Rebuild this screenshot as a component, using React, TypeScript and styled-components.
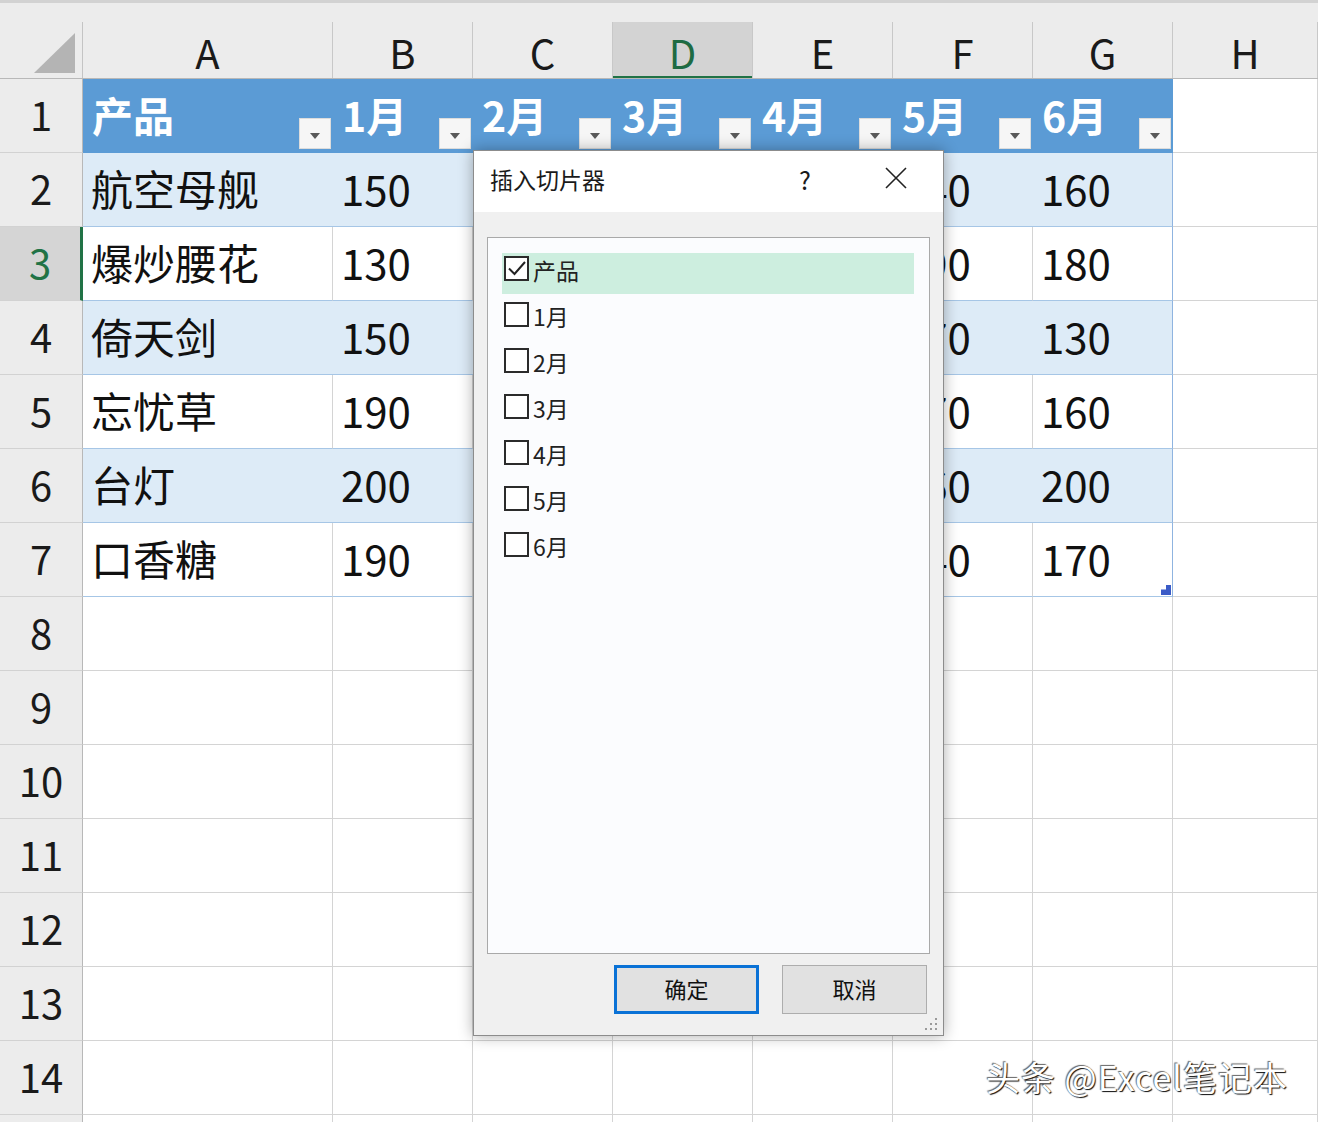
import React from 'react'
import styled, { createGlobalStyle, css } from 'styled-components'

const GlobalStyle = createGlobalStyle`
  html, body {
    margin: 0;
    padding: 0;
    background: #fff;
    overflow: hidden;
  }
  body {
    font-family: "Noto Sans CJK SC", "Noto Sans", sans-serif;
    color: #111;
  }
`

const COLS = '83px 250px 140px 140px 140px 140px 140px 140px 145px'
const LETTERS = ['A', 'B', 'C', 'D', 'E', 'F', 'G', 'H']
const HEADERS = ['产品', '1月', '2月', '3月', '4月', '5月', '6月']

const ROWS: string[][] = [
  ['航空母舰', '150', '120', '140', '130', '140', '160'],
  ['爆炒腰花', '130', '160', '150', '170', '190', '180'],
  ['倚天剑', '150', '140', '180', '120', '170', '130'],
  ['忘忧草', '190', '170', '130', '150', '170', '160'],
  ['台灯', '200', '180', '160', '190', '160', '200'],
  ['口香糖', '190', '150', '170', '140', '140', '170'],
]

const FIELDS = ['产品', '1月', '2月', '3月', '4月', '5月', '6月']

type Kind = 'head' | 'band' | 'plain' | 'blank'

const Sheet = styled.div`
  position: relative;
  width: 1318px;
  height: 1122px;
  overflow: hidden;
  background: #fff;
`

const HeaderRow = styled.div`
  display: grid;
  grid-template-columns: ${COLS};
  height: 79px;
  box-sizing: border-box;
  border-top: 3px solid #d2d2d2;
  border-bottom: 1px solid #b8b8b8;
  background: #ececec;
  align-items: end;
`

const Corner = styled.div`
  position: relative;
  height: 56px;
  box-sizing: border-box;
  border-right: 1px solid #c4c4c4;
  &::after {
    content: '';
    position: absolute;
    right: 7px;
    bottom: 5px;
    width: 41px;
    height: 40px;
    background: #b4b4b4;
    clip-path: polygon(100% 0, 100% 100%, 0 100%);
  }
`

const ColHead = styled.div<{ $active?: boolean }>`
  height: 56px;
  box-sizing: border-box;
  border-right: 1px solid #c8c8c8;
  display: flex;
  align-items: center;
  justify-content: center;
  padding-top: 3px;
  font-size: 40px;
  color: #1a1a1a;
  ${(p) =>
    p.$active &&
    css`
      background: #d3d3d3;
      color: #1e6b43;
      box-shadow: inset 0 -2px 0 #217346;
    `}
`

const Row = styled.div`
  display: grid;
  grid-template-columns: ${COLS};
  height: 74px;
`

const RowHead = styled.div<{ $active?: boolean }>`
  box-sizing: border-box;
  background: #ececec;
  border-right: 1px solid #b8b8b8;
  border-bottom: 1px solid #d2d2d2;
  display: flex;
  align-items: center;
  justify-content: center;
  padding-bottom: 4px;
  font-size: 40px;
  color: #1a1a1a;
  ${(p) =>
    p.$active &&
    css`
      background: #d5d5d5;
      color: #217346;
      border-right: 3px solid #217346;
    `}
`

const Cell = styled.div<{ $kind: Kind; $edge?: boolean }>`
  position: relative;
  box-sizing: border-box;
  display: flex;
  align-items: center;
  padding-left: 8px;
  padding-right: 2px;
  padding-bottom: 4px;
  font-size: 42px;
  line-height: 1;
  white-space: nowrap;
  ${(p) =>
    p.$kind === 'head' &&
    css`
      background: #5b9bd5;
      color: #fff;
      font-weight: 700;
      font-size: 41px;
      padding-left: 9px;
      padding-bottom: 0;
    `}
  ${(p) =>
    p.$kind === 'band' &&
    css`
      background: #ddebf7;
      border-bottom: 1px solid #a6c6e6;
    `}
  ${(p) =>
    p.$kind === 'plain' &&
    css`
      background: #fff;
      border-right: 1px solid #d4d4d4;
      border-bottom: 1px solid #a6c6e6;
    `}
  ${(p) =>
    p.$kind === 'blank' &&
    css`
      background: #fff;
      border-right: 1px solid #d4d4d4;
      border-bottom: 1px solid #d4d4d4;
    `}
  ${(p) =>
    p.$edge &&
    css`
      border-right: 1px solid #8fb4e0;
    `}
`

const HeadLabel = styled.span`
  margin-top: -4px;
`

const FilterButton = styled.div`
  margin-left: auto;
  align-self: flex-end;
  margin-bottom: 4px;
  width: 32px;
  height: 31px;
  box-sizing: border-box;
  background: #f6f6f6;
  border: 1px solid #dcdcdc;
  display: flex;
  align-items: center;
  justify-content: center;
  padding-top: 5px;
`

const ResizeHandle = styled.div`
  position: absolute;
  right: 1px;
  bottom: 1px;
  width: 10px;
  height: 10px;
  background: #3a5bc7;
  clip-path: polygon(100% 0, 100% 100%, 0 100%, 0 45%, 50% 45%, 50% 0);
`

const Dialog = styled.div`
  position: absolute;
  left: 473px;
  top: 150px;
  width: 471px;
  height: 886px;
  box-sizing: border-box;
  border: 1px solid #8c8c8c;
  background: #f0f0f0;
  box-shadow: 0 0 14px rgba(0, 0, 0, 0.32);
  display: flex;
  flex-direction: column;
`

const TitleBar = styled.div`
  height: 61px;
  flex: none;
  background: #fff;
  display: flex;
  align-items: center;
  padding-left: 16px;
  padding-bottom: 5px;
  box-sizing: border-box;
`

const Title = styled.span`
  font-size: 23px;
  color: #1a1a1a;
`

const HelpButton = styled.span`
  margin-left: auto;
  width: 44px;
  text-align: center;
  font-size: 25px;
  color: #1a1a1a;
  margin-right: 22px;
`

const CloseButton = styled.span`
  width: 94px;
  display: flex;
  align-items: center;
  justify-content: center;
  padding-bottom: 2px;
`

const Body = styled.div`
  flex: 1;
  display: flex;
  flex-direction: column;
  padding: 25px 13px 21px 13px;
`

const ListBox = styled.div`
  flex: 1;
  background: #fbfcfe;
  border: 1px solid #a9a9a9;
  padding: 15px 15px 0 14px;
  display: flex;
  flex-direction: column;
  gap: 5px;
`

const Item = styled.div<{ $selected?: boolean }>`
  height: 41px;
  display: flex;
  align-items: center;
  padding-left: 2px;
  background: ${(p) => (p.$selected ? '#cdeedf' : 'transparent')};
`

const Box = styled.span`
  width: 25px;
  height: 25px;
  box-sizing: border-box;
  border: 2px solid #2b2b2b;
  background: #fff;
  display: flex;
  align-items: center;
  justify-content: center;
  margin-top: -10px;
`

const ItemLabel = styled.span`
  margin-left: 4px;
  font-size: 23px;
  color: #222;
  margin-top: -8px;
`

const Buttons = styled.div`
  display: flex;
  justify-content: flex-end;
  gap: 23px;
  margin-top: 11px;
  padding-right: 3px;
`

const DialogButton = styled.div<{ $primary?: boolean }>`
  width: 145px;
  height: 49px;
  box-sizing: border-box;
  background: #e1e1e1;
  border: ${(p) => (p.$primary ? '3px solid #0a72d6' : '1px solid #adadad')};
  display: flex;
  align-items: center;
  justify-content: center;
  padding-bottom: 3px;
  font-size: 22px;
  color: #111;
`

const Grip = styled.div`
  position: absolute;
  right: 6px;
  bottom: 5px;
  width: 12px;
  height: 12px;
  display: grid;
  grid-template-columns: repeat(3, 2px);
  grid-template-rows: repeat(3, 2px);
  gap: 3px;
  span {
    background: #9a9a9a;
  }
`

const Watermark = styled.div`
  position: absolute;
  left: 986px;
  top: 1052px;
  font-size: 34px;
  letter-spacing: 1px;
  color: #fff;
  white-space: nowrap;
  text-shadow: 1px 1px 1px rgba(0, 0, 0, 0.95), -1px -1px 1px rgba(0, 0, 0, 0.6);
`

function Triangle() {
  return (
    <svg width="12" height="8" viewBox="0 0 12 8">
      <path d="M1 1 L11 1 L6 7 Z" fill="#595959" />
    </svg>
  )
}

function CloseIcon() {
  return (
    <svg width="22" height="22" viewBox="0 0 22 22">
      <path d="M1 1 L21 21 M21 1 L1 21" stroke="#222" strokeWidth="1.6" />
    </svg>
  )
}

function Check() {
  return (
    <svg width="21" height="21" viewBox="0 0 21 21">
      <path d="M3 10.5 L8.5 16 L19 4" stroke="#222" strokeWidth="2" fill="none" />
    </svg>
  )
}

function EmptyRow({ n }: { n?: number }) {
  return (
    <Row>
      <RowHead>{n}</RowHead>
      {LETTERS.map((l) => (
        <Cell key={l} $kind="blank" />
      ))}
    </Row>
  )
}

export default function App() {
  return (
    <>
      <GlobalStyle />
      <Sheet>
        <HeaderRow>
          <Corner />
          {LETTERS.map((l) => (
            <ColHead key={l} $active={l === 'D'}>
              {l}
            </ColHead>
          ))}
        </HeaderRow>

        <Row>
          <RowHead>1</RowHead>
          {HEADERS.map((h) => (
            <Cell key={h} $kind="head">
              <HeadLabel>{h}</HeadLabel>
              <FilterButton>
                <Triangle />
              </FilterButton>
            </Cell>
          ))}
          <Cell $kind="blank" />
        </Row>

        {ROWS.map((r, ri) => {
          const kind: Kind = ri % 2 === 0 ? 'band' : 'plain'
          return (
            <Row key={ri}>
              <RowHead $active={ri === 1}>{ri + 2}</RowHead>
              {r.map((v, ci) => (
                <Cell key={ci} $kind={kind} $edge={ci === 6}>
                  {v}
                  {ri === 5 && ci === 6 && <ResizeHandle />}
                </Cell>
              ))}
              <Cell $kind="blank" />
            </Row>
          )
        })}

        {[8, 9, 10, 11, 12, 13, 14].map((n) => (
          <EmptyRow key={n} n={n} />
        ))}
        <EmptyRow />

        <Dialog>
          <TitleBar>
            <Title>插入切片器</Title>
            <HelpButton>?</HelpButton>
            <CloseButton>
              <CloseIcon />
            </CloseButton>
          </TitleBar>
          <Body>
            <ListBox>
              {FIELDS.map((f, i) => (
                <Item key={f} $selected={i === 0}>
                  <Box>{i === 0 && <Check />}</Box>
                  <ItemLabel>{f}</ItemLabel>
                </Item>
              ))}
            </ListBox>
            <Buttons>
              <DialogButton $primary>确定</DialogButton>
              <DialogButton>取消</DialogButton>
            </Buttons>
          </Body>
          <Grip>
            <i />
            <i />
            <span />
            <i />
            <span />
            <span />
            <span />
            <span />
            <span />
          </Grip>
        </Dialog>

        <Watermark>头条 @Excel笔记本</Watermark>
      </Sheet>
    </>
  )
}
